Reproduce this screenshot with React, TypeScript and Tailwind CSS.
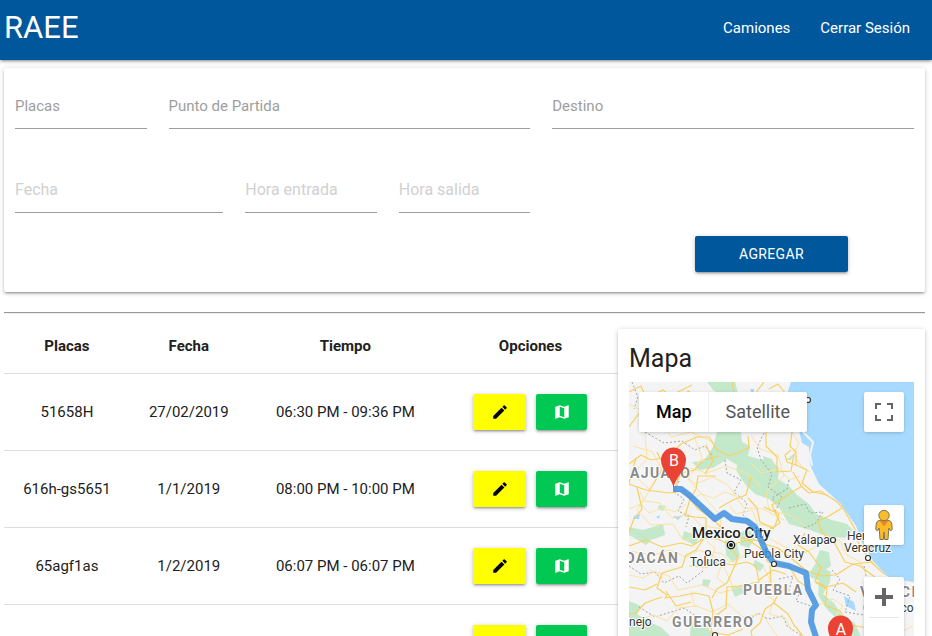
import type { ReactNode } from "react";
import { MdEdit, MdMap } from "react-icons/md";

const raised =
  "shadow-[0_2px_2px_0_rgba(0,0,0,0.14),0_3px_1px_-2px_rgba(0,0,0,0.12),0_1px_5px_0_rgba(0,0,0,0.2)]";

type Trip = { plates: string; date: string; time: string };

const trips: Trip[] = [
  { plates: "51658H", date: "27/02/2019", time: "06:30 PM - 09:36 PM" },
  { plates: "616h-gs5651", date: "1/1/2019", time: "08:00 PM - 10:00 PM" },
  { plates: "65agf1as", date: "1/2/2019", time: "06:07 PM - 06:07 PM" },
  { plates: "65agf1as", date: "1/3/2019", time: "06:07 PM - 06:07 PM" },
];

function NavBar() {
  return (
    <header className={`relative bg-[#01579b] pb-1 text-white ${raised}`}>
      <nav className="flex h-14 items-center justify-between pl-1 pr-[7px]">
        <a href="#inicio" className="text-[31px] leading-14">
          RAEE
        </a>
        <ul className="flex">
          <li>
            <a href="#camiones" className="block px-[15px] leading-14">
              Camiones
            </a>
          </li>
          <li>
            <a href="#salir" className="block px-[15px] leading-14">
              Cerrar Sesión
            </a>
          </li>
        </ul>
      </nav>
    </header>
  );
}

const inputLine =
  "h-[46px] w-full border-b border-[#9e9e9e] bg-transparent text-base outline-none placeholder:text-[#d1d1d1]";

function LabelledField({ id, label, span }: { id: string; label: string; span: string }) {
  return (
    <div className={`grid px-[11px] ${span}`}>
      <label
        htmlFor={id}
        className="pointer-events-none col-start-1 row-start-1 self-center text-[#9e9e9e]"
      >
        {label}
      </label>
      <input id={id} type="text" className={`col-start-1 row-start-1 ${inputLine}`} />
    </div>
  );
}

function PlaceholderField({ id, label, span }: { id: string; label: string; span: string }) {
  return (
    <div className={`px-[11px] ${span}`}>
      <input id={id} type="text" aria-label={label} placeholder={label} className={inputLine} />
    </div>
  );
}

function TripForm() {
  return (
    <form
      className={`rounded-xs bg-white pb-5 pt-[15px] ${raised}`}
      onSubmit={(e) => e.preventDefault()}
    >
      <div className="grid grid-cols-12">
        <LabelledField id="placas" label="Placas" span="col-span-2" />
        <LabelledField id="partida" label="Punto de Partida" span="col-span-5" />
        <LabelledField id="destino" label="Destino" span="col-span-5" />
      </div>
      <div className="mt-[38px] grid grid-cols-12">
        <PlaceholderField id="fecha" label="Fecha" span="col-span-3" />
        <PlaceholderField id="entrada" label="Hora entrada" span="col-span-2" />
        <PlaceholderField id="salida" label="Hora salida" span="col-span-2" />
      </div>
      <div className="mt-[23px] grid grid-cols-12">
        <button
          type="submit"
          className={`col-span-2 col-start-10 h-9 rounded-xs bg-[#01579b] text-sm uppercase tracking-wide text-white ${raised}`}
        >
          Agregar
        </button>
      </div>
    </form>
  );
}

function TripTable() {
  return (
    <table className="w-full table-fixed border-collapse text-center">
      <thead>
        <tr className="h-[53px] border-b border-[#dddddd]">
          <th className="w-[20.5%] font-bold">Placas</th>
          <th className="w-[19.2%] font-bold">Fecha</th>
          <th className="w-[31.8%] font-bold">Tiempo</th>
          <th className="w-[28.5%] font-bold">Opciones</th>
        </tr>
      </thead>
      <tbody>
        {trips.map((trip, i) => (
          <tr key={i} className="h-[77px] border-b border-[#dddddd]">
            <td>{trip.plates}</td>
            <td>{trip.date}</td>
            <td>{trip.time}</td>
            <td>
              <div className="flex justify-center gap-2.5">
                <button
                  type="button"
                  aria-label="Editar"
                  className={`flex h-9 w-[53px] items-center justify-center rounded-xs bg-[#ffff00] text-lg text-black ${raised}`}
                >
                  <MdEdit />
                </button>
                <button
                  type="button"
                  aria-label="Ver mapa"
                  className={`flex h-9 w-[51px] items-center justify-center rounded-xs bg-[#00c853] text-lg text-white ${raised}`}
                >
                  <MdMap />
                </button>
              </div>
            </td>
          </tr>
        ))}
      </tbody>
    </table>
  );
}

const greenAreas = [
  "M78 0L106 0L109 11L96 15L84 8Z",
  "M88 50L112 50L113 60L121 64L119 74L133 80L128 88L118 90L110 84L98 77L84 86L70 88L63 80L75 79L84 65Z",
  "M110 76L119 74L133 78L141 77L150 86L149 97L160 104L168 113L180 122L187 132L203 138L218 142L224 148L216 156L197 154L181 148L160 142L151 127L140 117L126 112L115 101L107 88Z",
  "M157 78L166 71L162 78Z",
  "M134 74L143 77L149 92L145 97L135 93Z",
  "M0 145L14 148L34 142L36 153L22 158L17 163L0 153Z",
  "M55 149L70 154L66 163L53 157Z",
  "M96 158L108 162L111 174L104 181L97 173Z",
  "M112 150L121 148L126 156L120 166L111 163Z",
  "M30 123L37 124L34 129L29 127Z",
  "M74 197L82 198L79 205L73 203Z",
  "M102 206L112 203L115 211L106 215Z",
  "M0 219L12 224L8 232L20 240L32 245L41 254L0 254Z",
  "M186 182L202 190L201 200L194 212L205 221L214 236L225 240L232 254L206 254L211 240L197 226L189 213L190 199L179 194Z",
  "M191 168L200 170L202 184L192 191L186 180Z",
  "M126 178L135 183L131 190L124 184Z",
  "M62 238L78 244L84 254L61 254Z",
];

const minorRoads = [
  "M0 22L18 32L10 44L22 50L36 45L42 55L62 50L84 60",
  "M4 64L24 70L32 87L53 91L66 102L84 95L99 103L115 126L134 127L155 138",
  "M16 53L18 77L4 92L21 108L8 128L22 143L44 142L54 158L75 154",
  "M65 54L73 76L59 97L78 118L92 134L91 153",
  "M122 53L131 67L149 73L155 94L137 110L140 128L159 132L176 144",
  "M0 169L24 173L40 168L57 175L70 168L84 173L97 189L105 207",
  "M20 188L40 194L49 208L73 203L91 211L119 203L139 209L161 208",
  "M102 150L121 159L136 154L154 164L173 172L194 161",
  "M62 209L65 223L83 230L99 222L114 235L133 232L148 254",
  "M163 50L170 61L165 73L172 84L181 90",
  "M134 184L141 198L133 211L145 218L140 232L156 236L164 250",
  "M11 110L15 119L31 121L43 136L60 132L73 144L95 147",
  "M50 70L54 84L78 91L97 84L119 92L132 105",
  "M122 81L132 91L151 87L160 98L171 94",
  "M196 152L211 159L218 173L231 180L238 194",
  "M190 223L204 217L214 224L207 231L220 244",
  "M240 235L249 246L262 244L272 250L284 244",
  "M100 123L107 132L123 128L129 142L147 145",
  "M10 238L24 233L38 239L49 226L68 224",
  "M0 127L12 122L20 131L34 126L46 130L57 122",
  "M78 160L86 166L82 178L92 184L88 196L96 202",
  "M84 170L94 172L100 180L112 176L120 170L131 174",
  "M0 193L14 196L24 190L34 196",
  "M60 118L72 112L84 116L96 110L106 114",
];

const mainRoads = [
  "M0 10L12 4L17 16L34 8L41 14L63 3",
  "M0 45L10 31L23 37L33 18L48 29L59 9L77 20",
  "M103 0L107 20L126 12L135 0",
  "M140 7L149 2L157 12",
  "M0 102L17 108L40 111L55 109L68 126L84 137L99 153L118 157L136 160",
  "M0 82L12 73L22 78L39 75L52 62L68 55L80 55L88 68L101 74L120 66L119 54",
  "M7 76L3 90L0 101M8 105L13 127L5 137L0 150",
  "M87 94L69 94L67 107L61 117L56 134L77 136L77 153L67 168L57 173L53 185L33 191L28 206L38 213L36 216L51 214L66 211L80 214L84 230L82 248L86 254",
  "M45 108L52 91L66 88L74 78L90 74",
  "M137 50L137 64L148 75L148 90L162 89L165 72M163 50L161 64L167 70L167 83L178 88L173 101L184 110L199 113",
  "M167 83L158 80L156 73L162 68",
  "M164 90L173 105L180 111L191 109L207 119L214 126L226 147L229 160L243 181L254 191L272 200",
  "M213 126L200 134L189 139L193 151L204 158L216 180L231 184L250 198L267 206L285 207",
  "M173 104L157 114L143 123L151 141L135 151L132 161L149 166L163 177L178 189L193 194L207 193L224 182L244 180",
  "M135 125L150 132L146 144M176 151L169 163L180 170L192 186L186 199L197 205L214 201L227 210",
  "M0 164L17 158L33 165L52 161L63 164L75 156L89 157L101 163L109 176L103 190L98 201L88 207L83 216",
  "M101 163L119 158L131 166L139 180L160 184L169 199L180 206",
  "M60 184L77 185L89 180L104 183L118 180L127 184L130 200L110 204L98 205L97 226L85 235",
  "M141 183L142 201L148 214L145 221L159 232L165 243L174 254",
  "M145 221L136 227L131 241L122 249L123 254",
  "M186 200L198 207L196 223L211 229L220 243L240 246L245 254",
  "M33 215L16 221L7 231L0 232M81 250L99 253L114 247",
  "M119 116L128 126L131 140L145 147M90 126L104 118L117 113L122 95",
  "M77 63L84 79L76 92M28 70L35 84L28 96L20 109",
  "M0 205L16 208L28 202M37 209L47 224L62 220M130 198L144 188L157 192",
];

const borders = [
  "M3 0L9 15L5 27M16 50L35 61L53 59L66 68L76 64L84 74",
  "M43 80L40 90L50 99L45 110L55 117L49 129L60 134L57 145",
  "M96 78L98 91L112 98L105 110L118 121L114 133L122 140",
  "M135 51L128 65L132 78L143 92L139 105L153 115L146 130",
  "M160 98L158 107L143 116L147 121M160 126L176 122L181 131L194 130L186 142L175 146",
  "M0 184L12 192L26 190L35 201L50 194L58 201L74 189",
  "M150 197L164 194L159 212L171 210L167 219L182 224",
  "M203 188L211 197L204 208L221 214L216 230L235 233",
  "M10 225L26 235L55 226L67 234M120 238L129 231L139 237L154 234L158 244L173 254",
  "M235 184L238 199L249 205L242 218L253 224",
];

const towns = [
  [179, 18],
  [79, 171],
  [145, 182],
  [204, 158],
  [239, 176],
  [86, 253],
];

function RouteMap() {
  return (
    <svg
      viewBox="0 0 285 400"
      preserveAspectRatio="xMinYMin slice"
      className="block h-[400px] w-full bg-[#f4f4f4]"
      role="img"
      aria-label="Ruta"
    >
      <rect width="285" height="400" fill="#f4f4f4" />
      {greenAreas.map((d) => (
        <path key={d} d={d} fill="#c4e8ca" />
      ))}
      <path
        d="M5 134L11 132L10 137L4 137ZM27 135L31 133L30 137ZM44 134L53 134L49 138ZM121 7h4v3h-3ZM215 214L225 220L227 229L217 224Z"
        fill="#a8daff"
      />
      <g fill="none" stroke="#a3a3a3" strokeWidth="1" strokeDasharray="2 2">
        {borders.map((d) => (
          <path key={d} d={d} />
        ))}
      </g>
      <g fill="none" stroke="#fbe3a0" strokeWidth="1" strokeLinejoin="round">
        {minorRoads.map((d) => (
          <path key={d} d={d} />
        ))}
      </g>
      <g fill="none" stroke="#f8d061" strokeWidth="1.2" strokeLinejoin="round">
        {mainRoads.map((d) => (
          <path key={d} d={d} />
        ))}
      </g>
      <path
        d="M162 0L159 9L161 25L168 40L173 61L180 65L181 83L190 102L201 112L212 122L227 144L233 160L244 179L258 194L271 198L285 200V0Z"
        fill="#a8daff"
      />
      <path
        d="M174 50L184 60L181 73L183 84"
        fill="none"
        stroke="#f4f4f4"
        strokeWidth="2"
      />

      <g
        fontFamily="Roboto, sans-serif"
        fill="#333333"
        stroke="#ffffff"
        strokeWidth="2"
        strokeLinejoin="round"
        paintOrder="stroke"
        fontSize="12"
      >
        <g fill="#8a8a8a" fontSize="14" fontWeight="700" className="tracking-widest">
          <text x="1" y="96">AJUATO</text>
          <text x="-4" y="181">OACÁN</text>
          <text x="114" y="213">PUEBLA</text>
          <text x="43" y="245">GUERRERO</text>
          <text x="231" y="215">VERACI</text>
        </g>
        <text x="63" y="156" fontSize="15" fontWeight="500" fill="#222222">
          Mexico City
        </text>
        <text x="61" y="184">Toluca</text>
        <text x="115" y="176">Puebla City</text>
        <text x="164" y="162">Xalapa</text>
        <text x="218" y="158">Heroica</text>
        <text x="215" y="170">Veracruz</text>
        <text x="0" y="244">nejo</text>
        <text x="234" y="230">Coatzacoalcos</text>
      </g>

      <path
        d="M44 107L52 107L60 113L74 126L86 137L95 131L103 137L118 139L126 145L132 158L138 172L145 181L160 184L177 191L179 207L187 223L183 228L182 240L188 258"
        fill="none"
        stroke="#3f8fe0"
        strokeOpacity="0.85"
        strokeWidth="6"
        strokeLinejoin="round"
      />

      {towns.map(([x, y]) => (
        <circle key={x} cx={x} cy={y} r="2.5" fill="#ffffff" stroke="#333333" strokeWidth="1.2" />
      ))}
      <circle cx="102" cy="163" r="3.6" fill="#ffffff" stroke="#111111" strokeWidth="1.3" />
      <circle cx="102" cy="163" r="2" fill="#111111" />

      <g fill="#ea4335">
        <path d="M44.500 106C44 97 32 89 32 78A12.500 12.500 0 0 1 57 78C57 89 45 97 44.500 106Z" />
        <path d="M211.500 275C211 266 199 258 199 246A12.500 12.500 0 0 1 224 246C224 258 212 266 211.500 275Z" />
      </g>
      <g fill="#ffffff" fontFamily="Roboto, sans-serif" fontSize="16" textAnchor="middle">
        <text x="45" y="84">B</text>
        <text x="212" y="253">A</text>
      </g>
    </svg>
  );
}

function MapControl({ label, children }: { label: string; children: ReactNode }) {
  return (
    <button
      type="button"
      aria-label={label}
      className="flex size-10 items-center justify-center rounded-xs bg-white shadow-[0_1px_4px_-1px_rgba(0,0,0,0.3)]"
    >
      {children}
    </button>
  );
}

function MapPanel() {
  return (
    <section className={`rounded-xs bg-white px-[11px] pb-5 pt-3.5 ${raised}`}>
      <h2 className="mb-[7px] text-[25px] leading-8">Mapa</h2>
      <div className="relative overflow-hidden">
        <RouteMap />
        <div className="absolute left-2.5 top-2.5 flex h-10 rounded-xs bg-white text-lg shadow-[0_1px_4px_-1px_rgba(0,0,0,0.3)]">
          <button type="button" className="border-r border-[#eeeeee] pl-[17px] pr-4 font-medium text-black">
            Map
          </button>
          <button type="button" className="px-[17px] text-[#565656]">
            Satellite
          </button>
        </div>
        <div className="absolute right-2.5 top-2.5">
          <MapControl label="Pantalla completa">
            <svg viewBox="0 0 18 18" className="size-[18px]" fill="#666666">
              <path d="M0 0h6v2H2v4H0ZM12 0h6v6h-2V2h-4ZM0 12h2v4h4v2H0ZM16 12h2v6h-6v-2h4Z" />
            </svg>
          </MapControl>
        </div>
        <div className="absolute right-2.5 top-[123px]">
          <MapControl label="Street View">
            <svg viewBox="0 0 18 32" className="h-8 w-[18px]">
              <path
                d="M4 11.500Q1.500 12 1.200 15L.8 20Q1 21.800 2.800 21.500L4.200 19L5 30.500H8.300L9 23L9.700 30.500H13L13.800 19L15.200 21.500Q17 21.800 17.200 20L16.800 15Q16.500 12 14 11.500Z"
                fill="#fbbc29"
                stroke="#7d7457"
                strokeWidth="1"
              />
              <path d="M4.500 11.500H13.500L9 17.500Z" fill="#e8852a" />
              <circle cx="9" cy="6.500" r="5.200" fill="#fbbc29" stroke="#7d7457" strokeWidth="1" />
            </svg>
          </MapControl>
        </div>
        <div className="absolute right-2.5 top-[195px] flex flex-col items-center rounded-xs bg-white shadow-[0_1px_4px_-1px_rgba(0,0,0,0.3)]">
          <button type="button" aria-label="Acercar" className="flex size-10 items-center justify-center">
            <svg viewBox="0 0 18 18" className="size-[18px]" fill="#666666">
              <path d="M7 0h4v7h7v4h-7v7H7v-7H0V7h7Z" />
            </svg>
          </button>
          <span className="h-px w-[30px] bg-[#e6e6e6]" />
          <button type="button" aria-label="Alejar" className="flex size-10 items-center justify-center">
            <svg viewBox="0 0 18 18" className="size-[18px]" fill="#666666">
              <path d="M0 7h18v4H0Z" />
            </svg>
          </button>
        </div>
      </div>
    </section>
  );
}

export default function App() {
  return (
    <div className="h-screen overflow-hidden bg-white font-[Roboto,sans-serif] text-[15px] leading-[22px] text-[#212121]">
      <NavBar />
      <main className="pl-1 pr-[7px] pt-2">
        <TripForm />
        <hr className="mt-5 h-0.5 border-b border-t border-b-[#eeeeee] border-t-[#9a9a9a]" />
        <div className="grid grid-cols-12">
          <div className="col-span-8 pt-1.5">
            <TripTable />
          </div>
          <div className="col-span-4 pt-[15px]">
            <MapPanel />
          </div>
        </div>
      </main>
    </div>
  );
}
